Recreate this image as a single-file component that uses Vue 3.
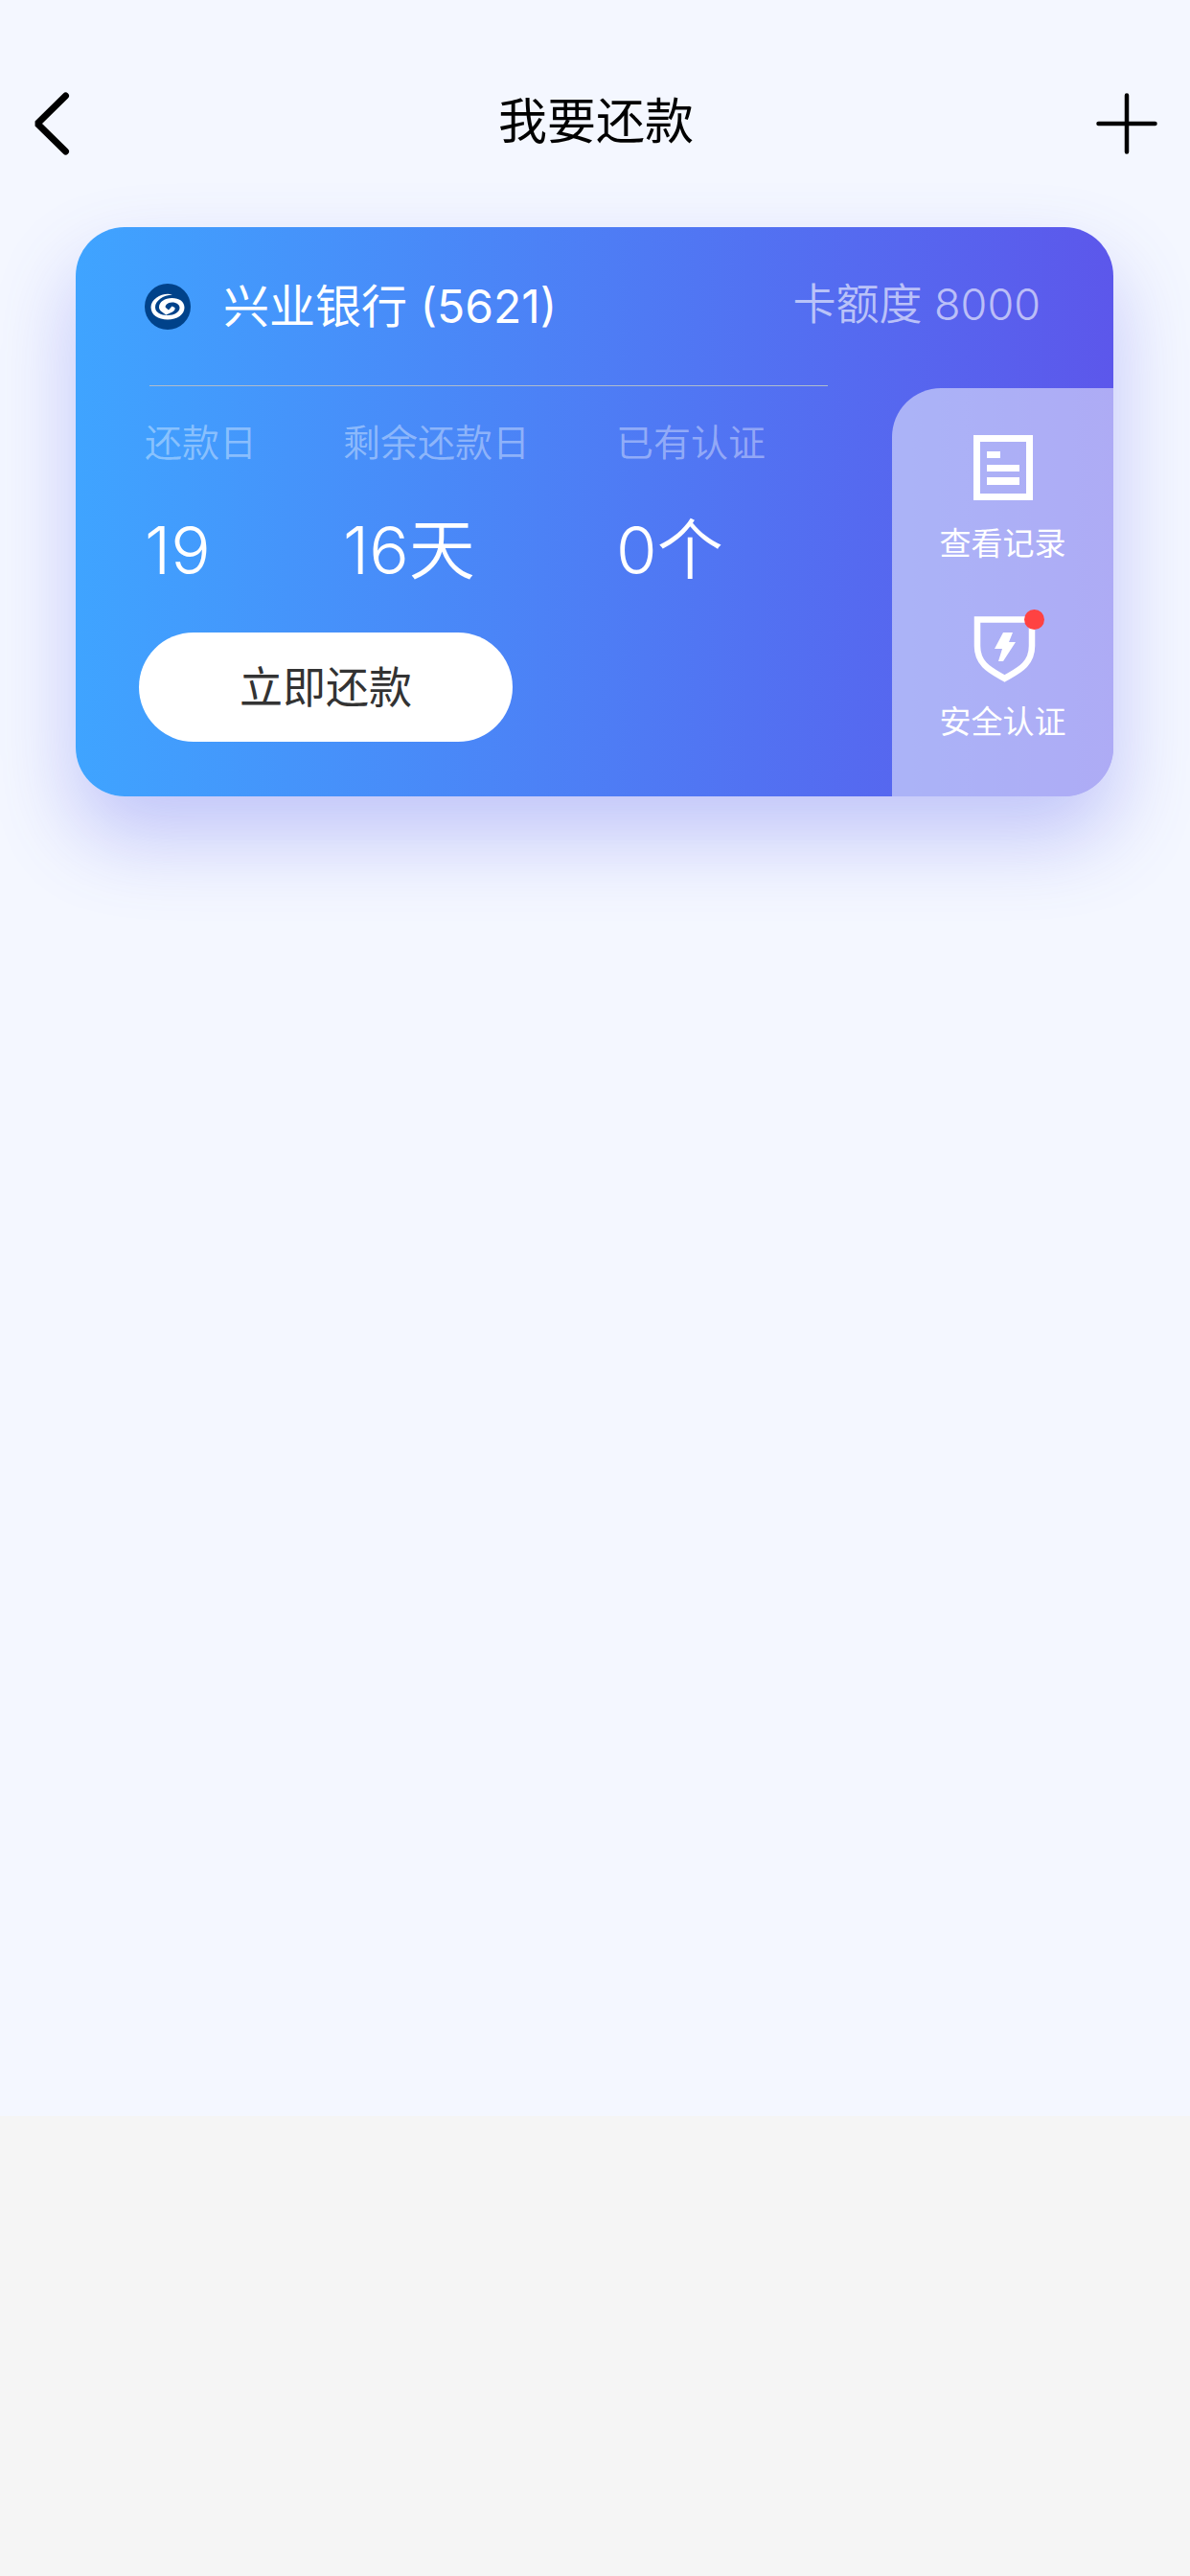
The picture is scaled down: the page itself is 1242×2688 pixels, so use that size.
<script setup>
const stats = [
  { label: '还款日', value: '19' },
  { label: '剩余还款日', value: '16天' },
  { label: '已有认证', value: '0个' },
]
</script>

<template>
  <div class="page">
    <div class="screen">
      <header class="nav">
        <button class="nav-btn" type="button" aria-label="返回">
          <svg width="36" height="66" viewBox="0 0 36 66" fill="none" stroke="#000" stroke-width="7" stroke-linecap="round" stroke-linejoin="bevel">
            <path d="M32.500 4 L3 33 L32.500 62" />
          </svg>
        </button>
        <h1 class="title">我要还款</h1>
        <button class="nav-btn nav-btn-end" type="button" aria-label="添加">
          <svg width="64" height="64" viewBox="0 0 64 64" fill="none" stroke="#000" stroke-width="4.500" stroke-linecap="round">
            <path d="M32 2.500V61.500M2.500 32H61.500" />
          </svg>
        </button>
      </header>

      <section class="card">
        <div class="card-head">
          <svg class="logo" width="48" height="48" viewBox="0 0 48 48">
            <circle cx="24" cy="24" r="24" fill="#00428a" />
            <path fill="#fff" d="M29 11.500C20 8.500 6.500 15 6.500 24.500C6.500 32.500 14 37.500 24 37.500C34 37.500 41.500 32 41.500 25C41.500 18.500 36 15 28.500 15C21 15 15 19 15 24.500C15 28 18 29.500 22.500 32.500L29 29.500C31 28.500 32 26.500 31.500 25L28.500 23.500L25 27.500L22 25C20.500 23 24 19.500 28.500 19.500C33.500 19.500 36.500 22 36.500 25C36.500 29.500 31 33 24 33C16.500 33 11 30 11 24.500C11 18 19 12 29 11.500Z" />
          </svg>
          <h2 class="bank">兴业银行 (5621)</h2>
          <span class="limit">卡额度 8000</span>
        </div>
        <hr class="rule" />
        <div class="card-body">
          <div class="main">
            <dl class="stats">
              <div v-for="s in stats" :key="s.label">
                <dt>{{ s.label }}</dt>
                <dd>{{ s.value }}</dd>
              </div>
            </dl>
            <button class="repay" type="button">立即还款</button>
          </div>
          <nav class="side">
            <a class="side-link" href="#records">
              <svg width="70" height="70" viewBox="0 0 70 70" fill="#fff">
                <path fill-rule="evenodd" d="M4 1H66V69H4ZM11 8V62H59V8Z" />
                <path d="M18 18H32V25H18ZM18 32H52V39H18ZM18 45H52V53H18Z" />
              </svg>
              <span>查看记录</span>
            </a>
            <a class="side-link" href="#security">
              <span class="badge-box">
                <svg width="70" height="70" viewBox="0 -3 70 70">
                  <path d="M8 4.500H65V32C65 52 50 58 36.500 66C23 58 8 52 8 32Z" fill="none" stroke="#fff" stroke-width="6.500" />
                  <path d="M35 18H45L41 28H48L35 48H30L34 35H26Z" fill="#fff" />
                </svg>
                <i class="dot"></i>
              </span>
              <span>安全认证</span>
            </a>
          </nav>
        </div>
      </section>
    </div>
    <div class="tail"></div>
  </div>
</template>

<style>
body {
  background: #f5f5f5;
}
</style>

<style scoped>
.page {
  display: flex;
  flex-direction: column;
  min-height: 100vh;
  font-family: Inter, "Noto Sans CJK SC", sans-serif;
  font-weight: 350;
}

.screen {
  flex: 1;
  padding-top: 63px;
  background: #f4f7ff;
}

.tail {
  height: 480px;
  background: #f5f5f5;
}

.nav {
  display: grid;
  grid-template-columns: 1fr auto 1fr;
  align-items: center;
  height: 132px;
  padding: 0 34px 0 36px;
}

button {
  border: 0;
  font: inherit;
  cursor: pointer;
}

svg {
  display: block;
  overflow: visible;
}

.nav-btn {
  justify-self: start;
  padding: 0;
  background: none;
}

.nav-btn-end {
  justify-self: end;
}

.title {
  margin: 0;
  padding-bottom: 4px;
  font-size: 51px;
  font-weight: 400;
  line-height: 72px;
  color: #000;
}

.card {
  margin: 42px 80px 0 79px;
  overflow: hidden;
  border-radius: 51px;
  background: linear-gradient(90deg, #3fa4ff, #5c57eb);
  box-shadow: 0 42px 84px rgba(84, 90, 236, 0.32);
  color: #fff;
}

.card-head {
  display: flex;
  align-items: center;
  height: 165px;
  padding: 0 76px 0 72px;
}

.bank {
  flex: 1;
  margin: 0 0 0 34px;
  font-size: 48px;
  font-weight: 400;
  line-height: 72px;
}

.limit {
  padding-bottom: 4px;
  font-size: 45px;
  line-height: 72px;
  color: rgba(255, 255, 255, 0.6);
}

.rule {
  height: 1px;
  margin: 0 298px 2px 77px;
  border: 0;
  background: #aebccd;
}

.card-body {
  display: flex;
}

.main {
  flex: 1;
  padding: 28px 0 57px 66px;
}

.stats {
  display: flex;
  gap: 90px;
  margin: 0 0 37px;
  padding-left: 6px;
}

dt {
  font-size: 39px;
  line-height: 58px;
  color: rgba(255, 255, 255, 0.4);
}

dd {
  margin: 34px 0 0;
  font-size: 69px;
  line-height: 98px;
}

.repay {
  width: 390px;
  height: 114px;
  padding: 0 0 6px;
  border-radius: 57px;
  background: #fff;
  font-size: 45px;
  font-weight: 400;
  color: #333;
}

.side {
  display: flex;
  flex-direction: column;
  gap: 48px;
  width: 231px;
  padding-top: 48px;
  border-radius: 51px 0 0 0;
  background: rgba(255, 255, 255, 0.5);
}

.side-link {
  display: flex;
  flex-direction: column;
  align-items: center;
  gap: 20px;
  font-size: 33px;
  font-weight: 400;
  line-height: 48px;
  color: #fff;
  text-decoration: none;
}

.badge-box {
  position: relative;
}

.dot {
  position: absolute;
  top: -3px;
  right: -8px;
  width: 21px;
  height: 21px;
  border-radius: 50%;
  background: #ff4242;
}
</style>
